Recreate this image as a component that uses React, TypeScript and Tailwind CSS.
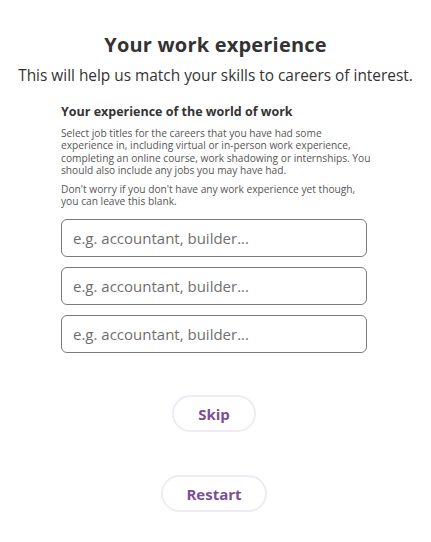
import { useState } from "react";

const FONT = "font-['Open_Sans','Liberation_Sans',sans-serif]";

export default function App() {
  const [jobs, setJobs] = useState(["", "", ""]);

  const update = (i: number, v: string) => {
    setJobs((prev) => prev.map((j, idx) => (idx === i ? v : j)));
  };

  return (
    <div className={`${FONT} w-[431px] min-h-[542px] bg-white text-[#333333] flex flex-col items-center`}>
      <h1 className="mt-[31px] text-[20px] leading-[28px] font-bold tracking-[0.2px]">Your work experience</h1>
      <p className="mt-[5px] text-[15.4px] leading-[24px] text-[#333333]">
        This will help us match your skills to careers of interest.
      </p>

      <div className="mt-[16px] ml-[-3px] w-[306px] flex flex-col">
        <h2 className="text-[12.5px] leading-[16px] font-bold text-[#333333]">Your experience of the world of work</h2>
        <p className="mt-[7px] w-[314px] text-[10.2px] leading-[12.4px] text-[#555555]">
          Select job titles for the careers that you have had some experience in, including virtual or in-person work
          experience, completing an online course, work shadowing or internships. You should also include any jobs you
          may have had.
        </p>
        <p className="mt-[6px] text-[10.2px] leading-[12.4px] text-[#555555]">
          Don't worry if you don't have any work experience yet though, you can leave this blank.
        </p>

        {/* job title inputs */}
        <div className="mt-[12px] flex flex-col gap-[10px]">
          {jobs.map((job, i) => (
            <input
              key={i}
              type="text"
              value={job}
              onChange={(e) => update(i, e.target.value)}
              placeholder="e.g. accountant, builder..."
              className="h-[38px] w-full rounded-[6px] border border-[#7a7a7a] px-[11px] text-[15px] text-[#333333] outline-none placeholder:text-[#6f6f6f]"
            />
          ))}
        </div>
      </div>

      <button className="mt-[42px] ml-[-3px] h-[37px] w-[84px] rounded-full border-2 border-[#f0ebf3] text-[15px] font-bold text-[#7b4f96]">
        Skip
      </button>
      <button className="mt-[43px] ml-[-3px] h-[37px] w-[106px] rounded-full border-2 border-[#f0ebf3] text-[15px] font-bold text-[#7b4f96]">
        Restart
      </button>
    </div>
  );
}
